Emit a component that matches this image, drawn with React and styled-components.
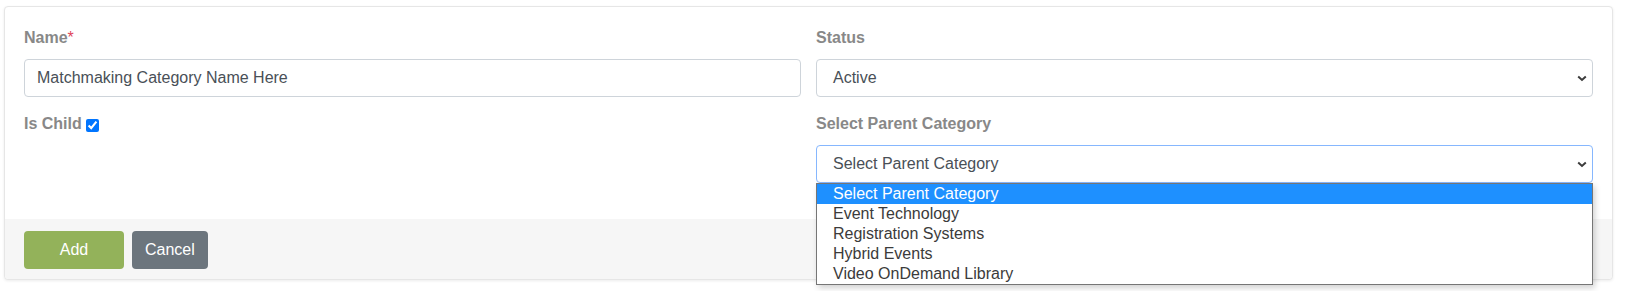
import React from "react";
import styled, { createGlobalStyle } from "styled-components";

const Global = createGlobalStyle`
  html, body { margin: 0; padding: 0; background: #fff; }
  body { font-family: "Liberation Sans", Arial, sans-serif; }
  * { box-sizing: border-box; }
`;

const Page = styled.div`
  padding: 6px 14px 11px 4px;
`;

const Card = styled.div`
  background: #fff;
  border: 1px solid #e6e6e6;
  border-radius: 4px;
  box-shadow: 0 1px 3px rgba(0, 0, 0, 0.08);
`;

const Body = styled.div`
  padding: 19px 19px 36px;
  display: grid;
  grid-template-columns: 1fr 1fr;
  column-gap: 15px;
  row-gap: 15px;
`;

const Field = styled.div`
  position: relative;
  display: flex;
  flex-direction: column;
`;

const Label = styled.label`
  font-size: 16px;
  line-height: 24px;
  font-weight: 700;
  color: #888888;
  margin-bottom: ${(p) => (p.$inline ? "0" : "9px")};
  display: flex;
  align-items: baseline;
`;

const Req = styled.span`
  color: #e0455a;
  font-weight: 400;
`;

const Check = styled.input`
  width: 13px;
  height: 13px;
  margin: 0 0 0 4px;
  accent-color: #0075ff;
  align-self: center;
  position: relative;
  top: 1px;
`;

const TextInput = styled.div`
  height: 38px;
  border: 1px solid #ced4da;
  border-radius: 4px;
  padding: 0 12px;
  display: flex;
  align-items: center;
  font-size: 16px;
  color: #495057;
  background: #fff;
`;

const SelectBox = styled.div`
  height: 38px;
  border: 1px solid ${(p) => (p.$focused ? "#86b7fe" : "#ced4da")};
  border-radius: 4px;
  padding: 0 5px 0 16px;
  display: flex;
  align-items: center;
  justify-content: space-between;
  font-size: 16px;
  color: #495057;
  background: #fff;
`;

const Chevron = styled.svg`
  width: 10px;
  height: 7px;
  flex: none;
`;

const Listbox = styled.ul`
  position: absolute;
  left: 0;
  right: 0;
  top: 100%;
  margin: 0;
  padding: 0;
  list-style: none;
  background: #fff;
  border: 1px solid #767676;
  box-shadow: 2px 3px 6px rgba(0, 0, 0, 0.18);
  z-index: 10;
`;

const Option = styled.li`
  height: 20px;
  line-height: 20px;
  padding-left: 16px;
  font-size: 16px;
  color: ${(p) => (p.$active ? "#fff" : "#3b3b3b")};
  background: ${(p) => (p.$active ? "#1e90ff" : "transparent")};
`;

const Footer = styled.div`
  background: #f6f6f6;
  padding: 12px 19px 10px;
  display: flex;
  gap: 8px;
  border-radius: 0 0 4px 4px;
`;

const Button = styled.button`
  height: 38px;
  min-width: ${(p) => (p.$wide ? "100px" : "0")};
  padding: 0 13px;
  border: none;
  border-radius: 4px;
  font-family: "Liberation Sans", Arial, sans-serif;
  font-size: 16px;
  color: #fff;
  background: ${(p) => p.$bg};
`;

const ChevronIcon = () => (
  <Chevron viewBox="0 0 10 7">
    <polyline
      points="1.2,1.5 5,5 8.8,1.5"
      fill="none"
      stroke="#3c3c3c"
      strokeWidth="2"
    />
  </Chevron>
);

const options = [
  "Select Parent Category",
  "Event Technology",
  "Registration Systems",
  "Hybrid Events",
  "Video OnDemand Library",
];

export default function App() {
  return (
    <Page>
      <Global />
      <Card>
        <Body>
          <Field>
            <Label>
              Name<Req>*</Req>
            </Label>
            <TextInput>Matchmaking Category Name Here</TextInput>
          </Field>
          <Field>
            <Label>Status</Label>
            <SelectBox>
              <span>Active</span>
              <ChevronIcon />
            </SelectBox>
          </Field>
          <Field>
            <Label $inline>
              Is Child
              <Check type="checkbox" checked readOnly />
            </Label>
          </Field>
          <Field>
            <Label>Select Parent Category</Label>
            <Field>
              <SelectBox $focused>
                <span>Select Parent Category</span>
                <ChevronIcon />
              </SelectBox>
              <Listbox>
                {options.map((o, i) => (
                  <Option key={o} $active={i === 0}>
                    {o}
                  </Option>
                ))}
              </Listbox>
            </Field>
          </Field>
        </Body>
        <Footer>
          <Button $wide $bg="#93b25a">Add</Button>
          <Button $bg="#6c757d">Cancel</Button>
        </Footer>
      </Card>
    </Page>
  );
}
